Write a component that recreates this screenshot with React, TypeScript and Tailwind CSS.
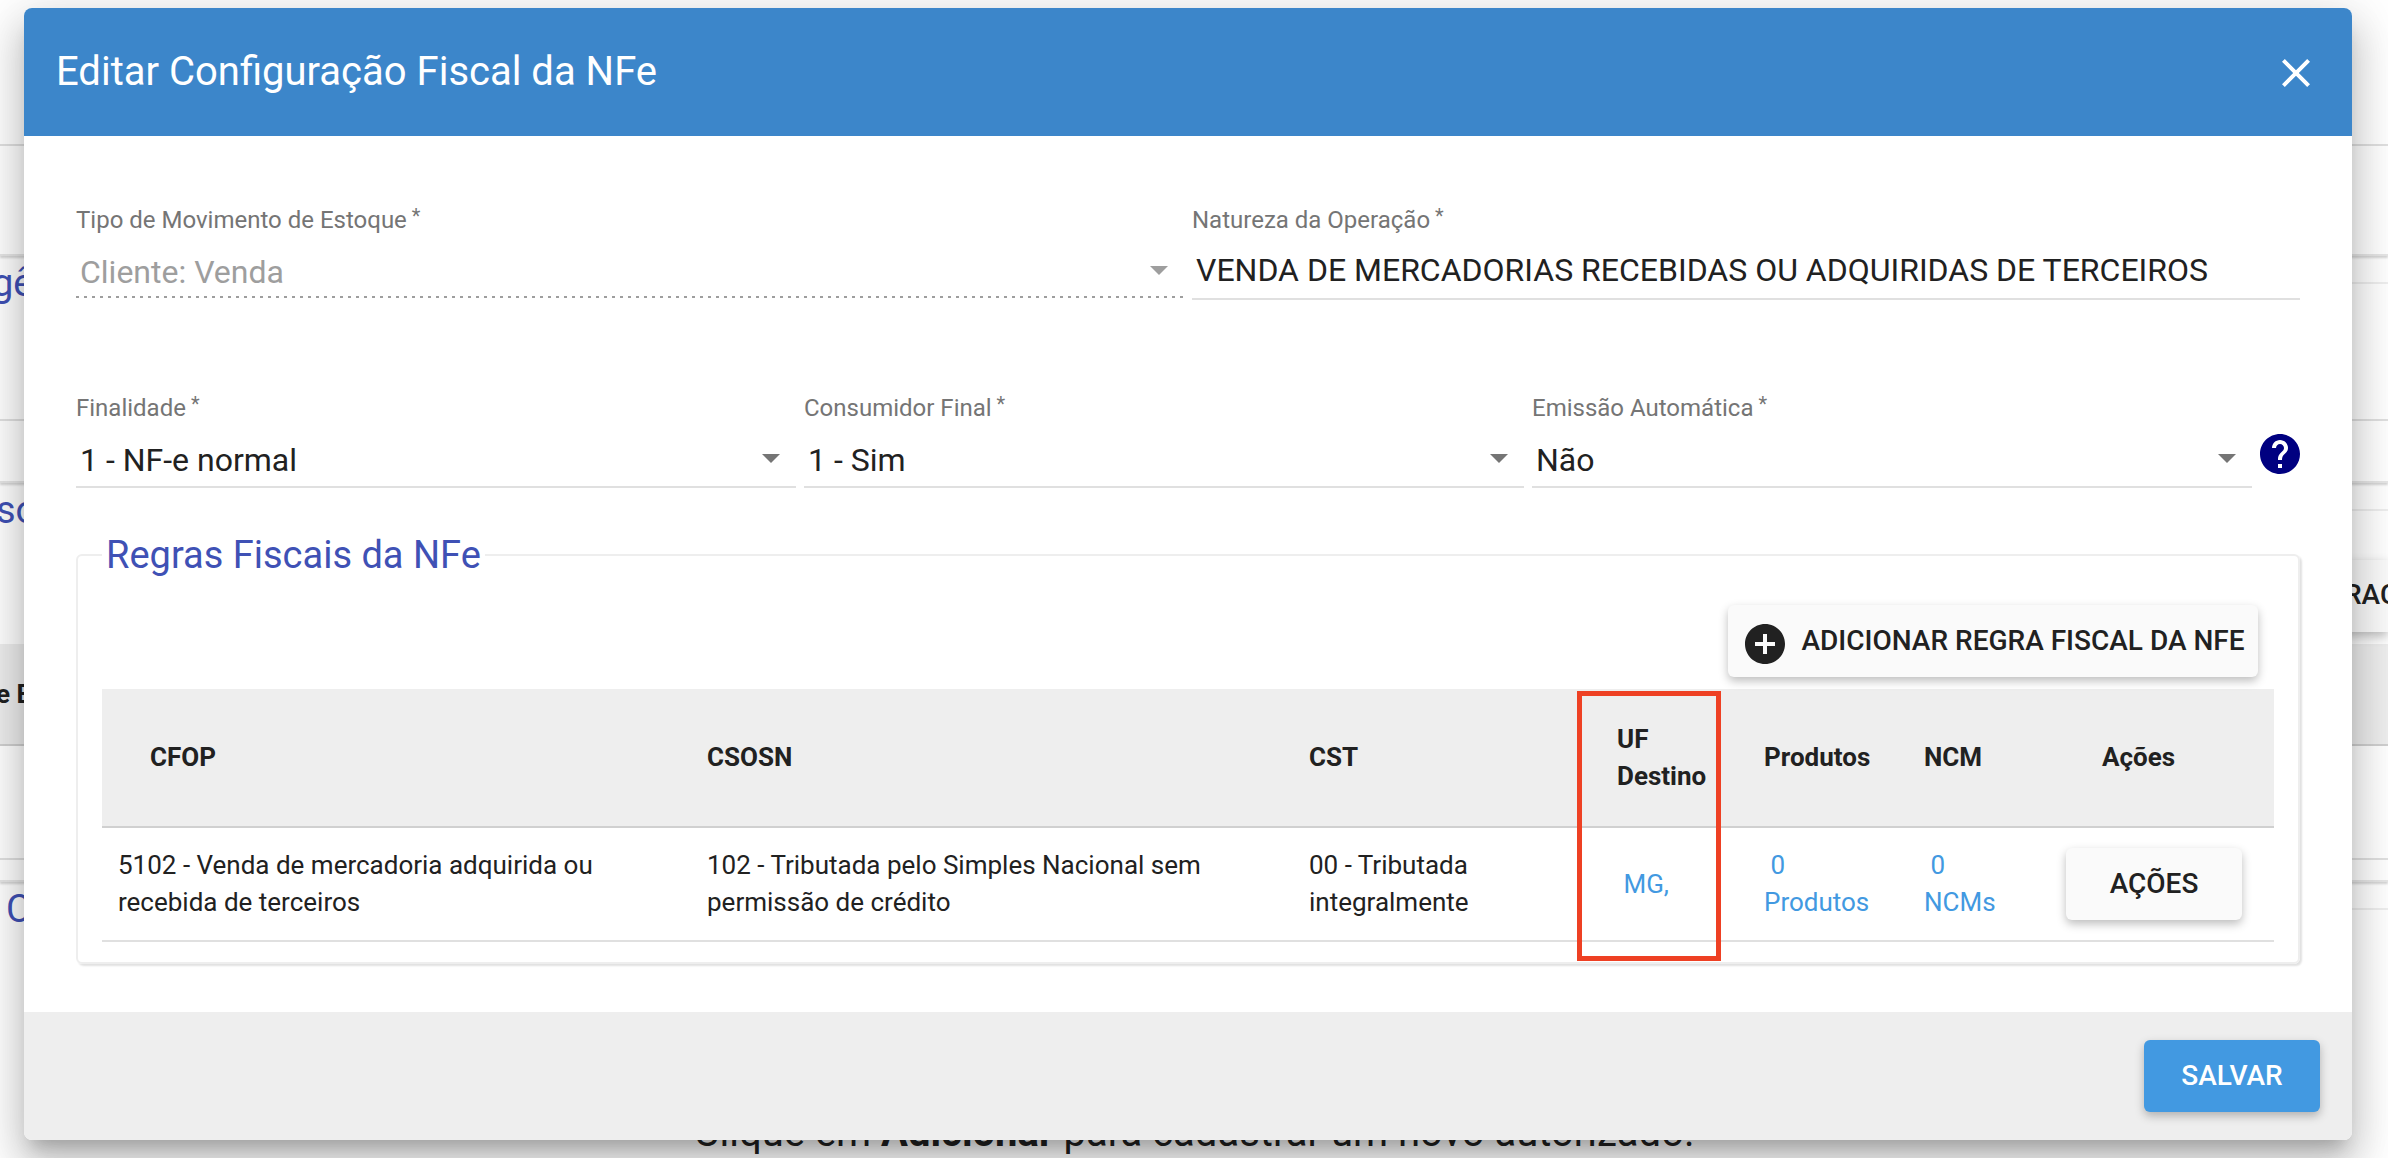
import React from 'react';
import { MdAddCircle, MdClose } from 'react-icons/md';

const raised = 'rounded-md bg-[#fafafa] text-[28px] leading-9 font-medium text-[#212121] shadow-[0_4px_10px_rgba(0,0,0,0.26)]';

const Arrow = () => (
  <svg viewBox="0 0 18 9" className="pointer-events-none absolute right-4 top-[14px] h-[9px] w-[18px] fill-current">
    <path d="M0 0h18L9 9z" />
  </svg>
);

const Label = ({ id, children }: { id: string; children: React.ReactNode }) => (
  <label htmlFor={id} className="block text-2xl leading-8 text-[#757575]">
    {children}
    <span className="align-top text-xl leading-6">&nbsp;*</span>
  </label>
);

type SelectFieldProps = { id: string; label: string; value: string; disabled?: boolean };

const SelectField = ({ id, label, value, disabled }: SelectFieldProps) => (
  <div className="min-w-0 flex-1">
    <Label id={id}>{label}</Label>
    <div className={disabled ? 'relative mt-4 text-[#9e9e9e]' : 'relative mt-4 text-[#757575]'}>
      <select
        id={id}
        disabled={disabled}
        className={
          disabled
            ? 'block w-full appearance-none bg-transparent pb-1 pl-1 pr-12 text-[32px] leading-10 text-[#9e9e9e] opacity-100'
            : 'block w-full appearance-none border-b-2 border-[#e0e0e0] bg-transparent pb-1.5 pl-1 pr-12 text-[32px] leading-10 text-[#212121]'
        }
      >
        <option>{value}</option>
      </select>
      {disabled && (
        <div className="h-0.5 bg-[repeating-linear-gradient(to_right,#9e9e9e_0_3px,transparent_3px_8px)]" />
      )}
      <Arrow />
    </div>
  </div>
);

const HelpIcon = () => (
  <svg viewBox="2 2 20 20" className="size-10 fill-[#000080]">
    <path d="M12 2C6.48 2 2 6.48 2 12s4.48 10 10 10 10-4.48 10-10S17.52 2 12 2zm1 17h-2v-2h2v2zm2.07-7.75l-.9.92C13.45 12.9 13 13.5 13 15h-2v-.5c0-1.1.45-2.1 1.17-2.83l1.24-1.26c.37-.36.59-.86.59-1.41 0-1.1-.9-2-2-2s-2 .9-2 2H8c0-2.21 1.79-4 4-4s4 1.79 4 4c0 .88-.36 1.68-.93 2.25z" />
  </svg>
);

const panelEnd = 'border-b-2 border-[#e6e6e6] shadow-[0_2px_2px_rgba(0,0,0,0.16)]';

// Page that stays visible around the edges of the dialog
const Backdrop = () => (
  <div className="absolute inset-0 overflow-hidden bg-white" aria-hidden="true">
    <div className="h-[146px] border-b-2 border-[#e0e0e0]" />
    <div className={`h-[110px] ${panelEnd}`} />
    <div className="flex h-[165px] border-b-2 border-[#e0e0e0] pt-0.5">
      <span className="-ml-2 text-[38px] leading-[50px] text-[#3f51b5]">gê</span>
      <span className="mt-6 flex-1 border-t-2 border-[#eeeeee]" />
    </div>
    <div className={`h-[62px] ${panelEnd}`} />
    <div className="flex h-[77px] pt-0.5">
      <span className="-ml-1 text-[38px] leading-[50px] text-[#3f51b5]">so</span>
      <span className="mt-6 flex-1 border-t-2 border-[#eeeeee]" />
    </div>
    <div className="flex h-[84px] justify-end">
      <div className="h-[72px] w-[60px] bg-[#fafafa] pl-4 text-[28px] leading-[70px] font-medium text-[#212121] shadow-[0_4px_10px_rgba(0,0,0,0.26)]">RAC</div>
    </div>
    <div className="h-[102px] border-b-2 border-[#d0d0d0] bg-[#eeeeee] text-[26px] leading-[100px] font-bold text-[#212121]">
      <span className="-ml-1">e E</span>
    </div>
    <div className="h-[114px] border-b-2 border-[#e0e0e0]" />
    <div className={`h-[22px] ${panelEnd}`} />
    <div className="flex h-[222px] pt-0.5">
      <span className="pl-1.5 text-[38px] leading-[50px] text-[#3f51b5]">C</span>
      <span className="mt-6 flex-1 border-t-2 border-[#eeeeee]" />
    </div>
    <p className="text-center text-[40px] leading-[58px] text-[#212121]">
      Clique em <b>Adicionar</b> para cadastrar um novo autorizado.
    </p>
  </div>
);

const th = 'h-[139px] border-b-2 border-[#d0d0d0] pl-4 text-left font-bold';
const td = 'h-[114px] border-b-2 border-[#e0e0e0] px-4';

const RulesTable = () => (
  <table className="mt-3 w-full table-fixed border-separate border-spacing-0 text-[26px] leading-[37px] text-[#212121]">
    <colgroup>
      <col />
      <col className="w-[602px]" />
      <col className="w-[308px]" />
      <col className="w-[147px]" />
      <col className="w-[160px]" />
      <col className="w-[142px]" />
      <col className="w-[224px]" />
    </colgroup>
    <thead className="bg-[#eeeeee]">
      <tr>
        <th className="h-[139px] border-b-2 border-[#d0d0d0] pl-12 text-left font-bold">CFOP</th>
        <th className={th}>CSOSN</th>
        <th className={th}>CST</th>
        <th className={`relative ${th}`}>
          UF
          <br />
          Destino
          <span className="pointer-events-none absolute -left-6 top-0.5 z-10 h-[270px] w-36 border-[5px] border-[#ee4023]" />
        </th>
        <th className={th}>Produtos</th>
        <th className={th}>NCM</th>
        <th className="h-[139px] border-b-2 border-[#d0d0d0] pl-[52px] text-left font-bold">Ações</th>
      </tr>
    </thead>
    <tbody>
      <tr>
        <td className={td}>5102 - Venda de mercadoria adquirida ou recebida de terceiros</td>
        <td className={td}>102 - Tributada pelo Simples Nacional sem permissão de crédito</td>
        <td className={td}>00 - Tributada integralmente</td>
        <td className={td}>
          <a href="#uf" className="text-[#4299e1]">&nbsp;MG,</a>
        </td>
        <td className={td}>
          <a href="#produtos" className="text-[#4299e1]">&nbsp;0<br />Produtos</a>
        </td>
        <td className={td}>
          <a href="#ncm" className="text-[#4299e1]">&nbsp;0<br />NCMs</a>
        </td>
        <td className={td}>
          <button type="button" className={`block h-[72px] w-44 ${raised}`}>AÇÕES</button>
        </td>
      </tr>
    </tbody>
  </table>
);

export default function App() {
  return (
    <div className="relative min-h-screen overflow-hidden font-[Roboto,sans-serif]">
      <Backdrop />
      <div
        role="dialog"
        aria-labelledby="dialog-title"
        className="relative ml-6 mr-9 mt-2 overflow-hidden rounded-lg bg-white shadow-[0_14px_16px_-8px_rgba(0,0,0,0.2),0_26px_38px_4px_rgba(0,0,0,0.14),0_10px_48px_8px_rgba(0,0,0,0.12)]"
      >
        <header className="flex h-32 items-center justify-between bg-[#3c86ca] px-8 text-white">
          <h2 id="dialog-title" className="text-[40px] leading-[48px]">Editar Configuração Fiscal da NFe</h2>
          <button type="button" aria-label="Fechar" className="pt-0.5">
            <MdClose size={48} />
          </button>
        </header>

        <form className="px-[52px] pb-12 pt-[68px]" onSubmit={(e) => e.preventDefault()}>
          <div className="flex gap-2">
            <SelectField id="tipo" label="Tipo de Movimento de Estoque" value="Cliente: Venda" disabled />
            <div className="min-w-0 flex-1">
              <Label id="natureza">Natureza da Operação</Label>
              <input
                id="natureza"
                defaultValue="VENDA DE MERCADORIAS RECEBIDAS OU ADQUIRIDAS DE TERCEIROS"
                className="mt-3 block h-[52px] w-full border-b-2 border-[#e0e0e0] pb-1.5 pl-1 text-[32px] leading-10 text-[#212121] outline-none"
              />
            </div>
          </div>

          <div className="mt-[92px] flex items-center gap-2">
            <SelectField id="finalidade" label="Finalidade" value="1 - NF-e normal" />
            <SelectField id="consumidor" label="Consumidor Final" value="1 - Sim" />
            <SelectField id="emissao" label="Emissão Automática" value="Não" />
            <button type="button" aria-label="Ajuda" className="pt-7">
              <HelpIcon />
            </button>
          </div>

          <fieldset className="mt-[42px] rounded-md border-2 border-[#eeeeee] px-6 pb-5 pt-[25px] shadow-[2px_2px_2px_rgba(0,0,0,0.12)]">
            <legend className="px-1 text-[38px] leading-[50px] text-[#3f51b5]">Regras Fiscais da NFe</legend>
            <div className="flex justify-end pr-4">
              <button type="button" className={`flex h-[72px] w-[530px] items-center justify-center gap-3 ${raised}`}>
                <MdAddCircle size={48} className="mt-1.5" />
                ADICIONAR REGRA FISCAL DA NFE
              </button>
            </div>
            <RulesTable />
          </fieldset>
        </form>

        <footer className="flex h-32 items-center justify-end bg-[#eeeeee] px-8">
          <button type="submit" className="h-[72px] w-44 rounded-md bg-[#4299e1] text-[28px] leading-9 font-medium text-white shadow-[0_4px_10px_rgba(0,0,0,0.26)]">
            SALVAR
          </button>
        </footer>
      </div>
    </div>
  );
}
